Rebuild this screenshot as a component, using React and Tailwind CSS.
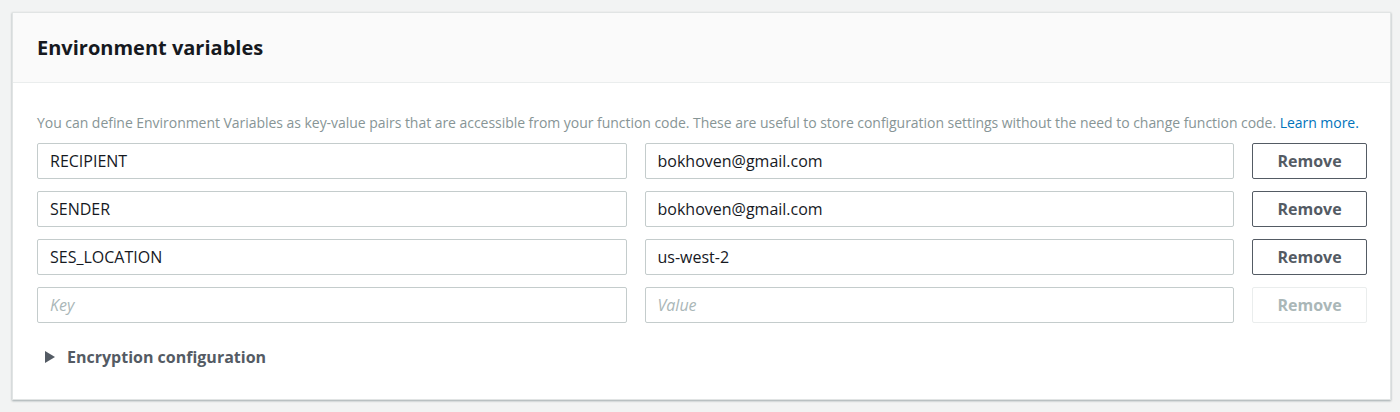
const rows = [
  { key: 'RECIPIENT', value: 'bokhoven@gmail.com' },
  { key: 'SENDER', value: 'bokhoven@gmail.com' },
  { key: 'SES_LOCATION', value: 'us-west-2' },
];

function Field({ value, placeholder }) {
  return (
    <div className="flex-1 h-9 flex items-center px-3 border border-[#c4cccc] rounded-[2px] bg-white text-[16px]">
      {value ? (
        <span className="text-[#16191f]">{value}</span>
      ) : (
        <span className="text-[#aab7b8] italic">{placeholder}</span>
      )}
    </div>
  );
}

function RemoveButton({ disabled }) {
  return (
    <button
      className={
        disabled
          ? 'w-[115px] h-9 shrink-0 border border-[#eaeded] rounded-[2px] bg-white text-[16px] font-bold text-[#aab7b8]'
          : 'w-[115px] h-9 shrink-0 border border-[#545b64] rounded-[2px] bg-white text-[16px] font-bold text-[#545b64]'
      }
    >
      Remove
    </button>
  );
}

export default function App() {
  return (
    <div className="w-[1400px] h-[412px] bg-[#f2f3f3] p-3 pr-[9px] font-['Open_Sans',sans-serif]">
      <div className="bg-white border border-[#e1e4e4] shadow-[0_1px_2px_rgba(0,28,36,0.35)] h-[388px]">
        <div className="h-[70px] bg-[#fafafa] border-b border-[#eaeded] flex items-center px-6">
          <h2 className="text-[20px] font-bold text-[#16191f]">Environment variables</h2>
        </div>
        <div className="pl-6 pr-[23px] pt-[29px]">
          <p className="text-[14px] text-[#879596] tracking-[-0.04px] whitespace-nowrap">
            You can define Environment Variables as key-value pairs that are accessible from your function code. These are useful to store configuration settings without the need to change function code.{' '}
            <span className="text-[#0073bb]">Learn more.</span>
          </p>
          <div className="mt-[10px] flex flex-col gap-3">
            {rows.map((r) => (
              <div key={r.key} className="flex items-center gap-[18px]">
                <Field value={r.key} />
                <Field value={r.value} />
                <RemoveButton />
              </div>
            ))}
            <div className="flex items-center gap-[18px]">
              <Field placeholder="Key" />
              <Field placeholder="Value" />
              <RemoveButton disabled />
            </div>
          </div>
          <div className="mt-[22px] flex items-center gap-3 pl-2 text-[#545b64]">
            <svg width="10" height="12" viewBox="0 0 10 12">
              <path d="M0 0 L10 6 L0 12 Z" fill="#545b64" />
            </svg>
            <span className="text-[16px] font-bold">Encryption configuration</span>
          </div>
        </div>
      </div>
    </div>
  );
}
